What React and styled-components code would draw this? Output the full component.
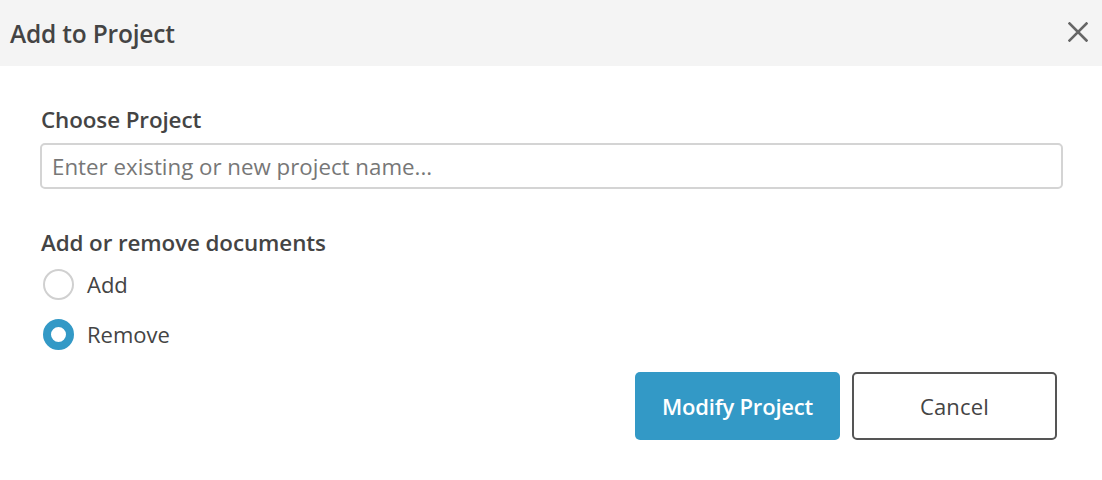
import React, { useState } from 'react'
import styled, { createGlobalStyle } from 'styled-components'

const GlobalStyle = createGlobalStyle`
  body {
    margin: 0;
    background: #fff;
    font-family: "Open Sans", "Liberation Sans", sans-serif;
    color: #444;
  }
`

const Modal = styled.div`
  width: 1102px;
  height: 480px;
  background: #fff;
`

const Header = styled.div`
  height: 66px;
  background: #f4f4f4;
  display: flex;
  align-items: center;
  justify-content: space-between;
  padding: 0 12px 0 10px;
  box-sizing: border-box;
`

const Title = styled.h2`
  margin: 0;
  font-size: 24.5px;
  font-weight: 600;
  color: #444;
  letter-spacing: -0.2px;
`

const CloseButton = styled.button`
  border: none;
  background: none;
  padding: 0;
  width: 24px;
  height: 24px;
  display: flex;
  align-items: center;
  justify-content: center;
  cursor: pointer;
  margin-top: -2px;
`

const Body = styled.div`
  padding: 40px 39px 0 40px;
`

const Label = styled.div`
  font-size: 22.4px;
  font-weight: 600;
  color: #444;
  margin-left: 1px;
  line-height: 28px;
  letter-spacing: -0.1px;
`

const TextInput = styled.input`
  display: block;
  width: 100%;
  height: 46px;
  box-sizing: border-box;
  margin-top: 9px;
  border: 2px solid #d4d4d4;
  border-radius: 5px;
  padding: 0 10px;
  font-family: inherit;
  font-size: 22.3px;
  color: #444;
  outline: none;

  &::placeholder {
    color: #777;
  }
`

const Section = styled.div`
  margin-top: 40px;
`

const RadioList = styled.div`
  display: flex;
  flex-direction: column;
  gap: 19px;
  margin-top: 12px;
  margin-left: 3px;
`

const RadioRow = styled.label`
  display: flex;
  align-items: center;
  gap: 13px;
  font-size: 22px;
  color: #444;
  cursor: pointer;
  line-height: 31px;
`

const RadioCircle = styled.span`
  width: 31px;
  height: 31px;
  box-sizing: border-box;
  border-radius: 50%;
  background: #fff;
  border: ${p => (p.$checked ? '8.5px solid #3399c6' : '2px solid #d0d0d0')};
`

const Footer = styled.div`
  display: flex;
  justify-content: flex-end;
  gap: 12px;
  margin-top: 22px;
  margin-right: 6px;
`

const Button = styled.button`
  width: 205px;
  height: 68px;
  box-sizing: border-box;
  border-radius: 5px;
  font-family: inherit;
  font-size: 22px;
  cursor: pointer;
  font-weight: ${p => (p.$primary ? 600 : 400)};
  letter-spacing: ${p => (p.$primary ? '-0.2px' : '0.2px')};
  background: ${p => (p.$primary ? '#3399c6' : '#fff')};
  color: ${p => (p.$primary ? '#fff' : '#444')};
  border: ${p => (p.$primary ? 'none' : '2px solid #555')};
`

export default function App() {
  const [mode, setMode] = useState('remove')
  return (
    <>
      <GlobalStyle />
      <Modal>
        <Header>
          <Title>Add to Project</Title>
          <CloseButton aria-label="Close">
            <svg width="20" height="20" viewBox="0 0 20 20">
              <path d="M1.5 1.5 L18.5 18.5 M18.5 1.5 L1.5 18.5" stroke="#666" strokeWidth="2.6" strokeLinecap="square" />
            </svg>
          </CloseButton>
        </Header>
        <Body>
          <Label>Choose Project</Label>
          <TextInput placeholder="Enter existing or new project name..." />
          <Section>
            <Label>Add or remove documents</Label>
            <RadioList>
              <RadioRow onClick={() => setMode('add')}>
                <RadioCircle $checked={mode === 'add'} />
                Add
              </RadioRow>
              <RadioRow onClick={() => setMode('remove')}>
                <RadioCircle $checked={mode === 'remove'} />
                Remove
              </RadioRow>
            </RadioList>
          </Section>
          <Footer>
            <Button $primary>Modify Project</Button>
            <Button>Cancel</Button>
          </Footer>
        </Body>
      </Modal>
    </>
  )
}
